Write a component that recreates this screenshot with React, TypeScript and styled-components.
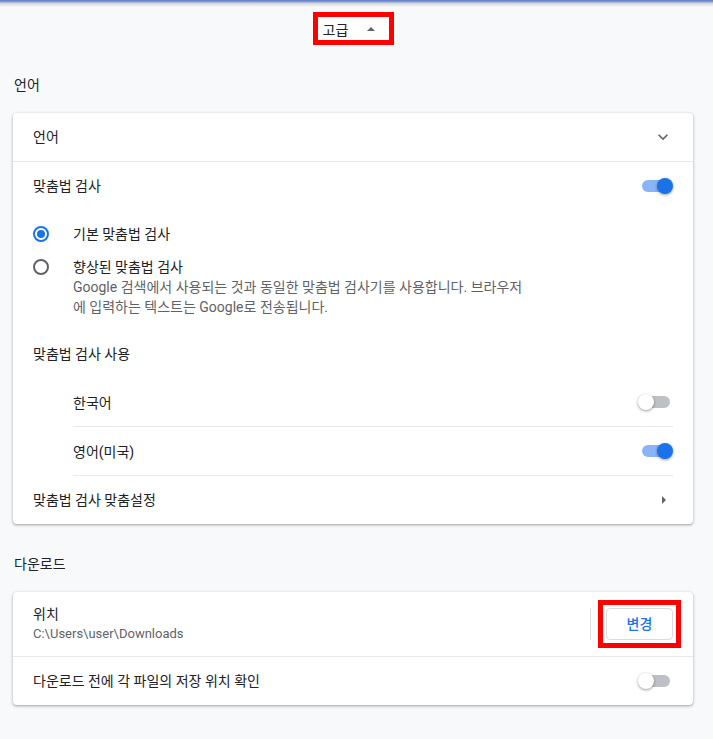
import styled, { createGlobalStyle } from "styled-components";

const GlobalStyle = createGlobalStyle`
  body {
    margin: 0;
    background: #f8f9fa;
    font-family: Roboto, "Noto Sans CJK KR", sans-serif;
    font-size: 14px;
    color: #202124;
  }
`;

const TopEdge = styled.div`
  height: 7px;
  background: linear-gradient(#5a78c4 0, #8da0d6 2px, #d0d2d6 3px, #f8f9fa 7px);
`;

const Page = styled.div`
  padding: 0 20px 20px 13px;
`;

const AdvancedRow = styled.div`
  display: flex;
  justify-content: center;
  padding: 5px 0 0;
`;

// red annotation frame drawn around a control
const Frame = styled.span<{ $pad?: number }>`
  display: inline-flex;
  border: 5px solid #ff0000;
  padding: ${(p) => p.$pad ?? 0}px;
  margin: ${(p) => (p.$pad ? `-${p.$pad + 5}px -${p.$pad + 5}px -${p.$pad + 5}px 0` : "0")};
`;

const AdvancedButton = styled.button`
  display: flex;
  align-items: center;
  gap: 19px;
  height: 23px;
  width: 71px;
  padding: 0 0 0 5px;
  border: none;
  background: #ffffff;
  font: inherit;
  color: #202124;
  cursor: pointer;
`;

const ArrowUp = styled.span`
  width: 0;
  height: 0;
  border-left: 4px solid transparent;
  border-right: 4px solid transparent;
  border-bottom: 4px solid #5f6368;
`;

const SectionTitle = styled.h2`
  margin: 30px 0 18px;
  padding-left: 1px;
  font-size: 14px;
  font-weight: 400;
  line-height: 20px;
  color: #202124;
`;

const Card = styled.div`
  background: #ffffff;
  border-radius: 4px;
  box-shadow: 0 1px 2px 0 rgba(60, 64, 67, 0.3),
    0 1px 3px 1px rgba(60, 64, 67, 0.15);
`;

const Row = styled.div<{ $tall?: boolean; $divider?: boolean }>`
  display: flex;
  align-items: center;
  min-height: ${(p) => (p.$tall ? "64px" : "48px")};
  padding: 0 20px;
  border-bottom: ${(p) => (p.$divider ? "1px solid #e9eaed" : "none")};
  line-height: 20px;
`;

const Label = styled.div`
  flex: 1;
`;

const PathText = styled.div`
  color: #5f6368;
  font-size: 13px;
  line-height: 20px;
`;

const SubList = styled.div`
  margin: 0 20px 0 60px;
`;

const SubRow = styled.div<{ $divider?: boolean }>`
  display: flex;
  align-items: center;
  height: 48px;
  border-bottom: ${(p) => (p.$divider ? "1px solid #e9eaed" : "none")};
`;

const RadioGroup = styled.div`
  padding: 7px 20px 5px;
`;

const RadioRow = styled.div<{ $top?: boolean }>`
  display: flex;
  align-items: ${(p) => (p.$top ? "flex-start" : "center")};
  gap: 24px;
  min-height: 34px;
  padding: ${(p) => (p.$top ? "6px 0 8px" : "0")};
  line-height: 20px;
  box-sizing: border-box;
`;

const RadioCircle = styled.span<{ $checked?: boolean; $top?: boolean }>`
  flex: none;
  width: 16px;
  height: 16px;
  box-sizing: border-box;
  margin-top: ${(p) => (p.$top ? "2px" : "0")};
  border-radius: 50%;
  border: 2px solid ${(p) => (p.$checked ? "#1a73e8" : "#5f6368")};
  display: flex;
  align-items: center;
  justify-content: center;

  &::after {
    content: "";
    width: 8px;
    height: 8px;
    border-radius: 50%;
    background: ${(p) => (p.$checked ? "#1a73e8" : "transparent")};
  }
`;

const Description = styled.div`
  width: 452px;
  color: #5f6368;
`;

const Toggle = styled.span<{ $on?: boolean }>`
  position: relative;
  flex: none;
  width: 28px;
  height: 12px;
  margin-right: 3px;
  border-radius: 6px;
  background: ${(p) => (p.$on ? "#8ab4f8" : "#bdc1c6")};

  &::after {
    content: "";
    position: absolute;
    top: -2px;
    left: ${(p) => (p.$on ? "15px" : "-4px")};
    width: 16px;
    height: 16px;
    border-radius: 50%;
    background: ${(p) => (p.$on ? "#1a73e8" : "#ffffff")};
    box-shadow: 0 1px 3px 0 rgba(0, 0, 0, 0.4);
  }
`;

const IconBox = styled.span`
  display: flex;
  align-items: center;
  justify-content: center;
  width: 20px;
  height: 20px;
  color: #5f6368;
`;

const SubArrow = styled.span`
  width: 0;
  height: 0;
  margin-right: 7px;
  border-top: 4px solid transparent;
  border-bottom: 4px solid transparent;
  border-left: 4px solid #5f6368;
`;

const Separator = styled.span`
  width: 1px;
  height: 32px;
  margin: 0 7px 0 16px;
  background: #dadce0;
`;

const ChangeButton = styled.button`
  width: 67px;
  height: 32px;
  border: 1px solid #dadce0;
  border-radius: 4px;
  background: #ffffff;
  color: #1a73e8;
  font: inherit;
  font-size: 14px;
  font-weight: 500;
  cursor: pointer;
`;

const ChevronDown = () => (
  <svg width="20" height="20" viewBox="0 0 24 24" fill="currentColor">
    <path d="M16.59 8.59 12 13.17 7.41 8.59 6 10l6 6 6-6z" />
  </svg>
);

export default function App() {
  return (
    <>
      <GlobalStyle />
      <TopEdge />
      <Page>
        <AdvancedRow>
          <Frame>
            <AdvancedButton>
              고급
              <ArrowUp />
            </AdvancedButton>
          </Frame>
        </AdvancedRow>

        <SectionTitle>언어</SectionTitle>
        <Card>
          <Row $divider>
            <Label>언어</Label>
            <IconBox>
              <ChevronDown />
            </IconBox>
          </Row>
          <Row>
            <Label>맞춤법 검사</Label>
            <Toggle $on />
          </Row>
          <RadioGroup>
            <RadioRow>
              <RadioCircle $checked />
              <div>기본 맞춤법 검사</div>
            </RadioRow>
            <RadioRow $top>
              <RadioCircle $top />
              <div>
                <div>향상된 맞춤법 검사</div>
                <Description>
                  Google 검색에서 사용되는 것과 동일한 맞춤법 검사기를
                  사용합니다. 브라우저에 입력하는 텍스트는 Google로
                  전송됩니다.
                </Description>
              </div>
            </RadioRow>
          </RadioGroup>
          <Row>
            <Label>맞춤법 검사 사용</Label>
          </Row>
          <SubList>
            <SubRow $divider>
              <Label>한국어</Label>
              <Toggle />
            </SubRow>
            <SubRow $divider>
              <Label>영어(미국)</Label>
              <Toggle $on />
            </SubRow>
          </SubList>
          <Row>
            <Label>맞춤법 검사 맞춤설정</Label>
            <SubArrow />
          </Row>
        </Card>

        <SectionTitle>다운로드</SectionTitle>
        <Card>
          <Row $tall $divider>
            <Label>
              <div>위치</div>
              <PathText>C:\Users\user\Downloads</PathText>
            </Label>
            <Separator />
            <Frame $pad={3}>
              <ChangeButton>변경</ChangeButton>
            </Frame>
          </Row>
          <Row>
            <Label>다운로드 전에 각 파일의 저장 위치 확인</Label>
            <Toggle />
          </Row>
        </Card>
      </Page>
    </>
  );
}
